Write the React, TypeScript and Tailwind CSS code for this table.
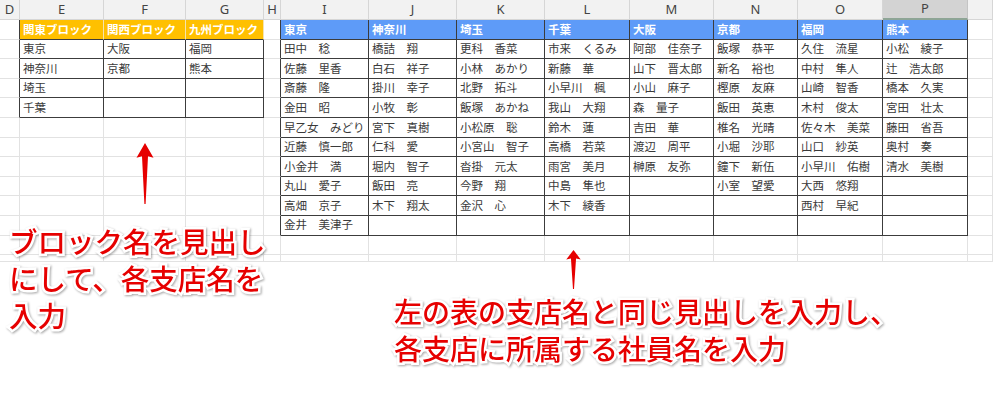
import React from 'react';

// Column letters across the visible sheet (D is cut off at the left edge)
const columns = ['D', 'E', 'F', 'G', 'H', 'I', 'J', 'K', 'L', 'M', 'N', 'O', 'P', ''];

const blocks = [
  { title: '関東ブロック', branches: ['東京', '神奈川', '埼玉', '千葉'] },
  { title: '関西ブロック', branches: ['大阪', '京都'] },
  { title: '九州ブロック', branches: ['福岡', '熊本'] },
];

const branches = [
  { title: '東京', staff: ['田中　稔', '佐藤　里香', '斎藤　隆', '金田　昭', '早乙女　みどり', '近藤　慎一郎', '小金井　満', '丸山　愛子', '高畑　京子', '金井　美津子'] },
  { title: '神奈川', staff: ['橋詰　翔', '白石　祥子', '掛川　幸子', '小牧　彰', '宮下　真樹', '仁科　愛', '堀内　智子', '飯田　亮', '木下　翔太'] },
  { title: '埼玉', staff: ['更科　香菜', '小林　あかり', '北野　拓斗', '飯塚　あかね', '小松原　聡', '小宮山　智子', '沓掛　元太', '今野　翔', '金沢　心'] },
  { title: '千葉', staff: ['市来　くるみ', '新藤　華', '小早川　楓', '我山　大翔', '鈴木　蓮', '高橋　若菜', '雨宮　美月', '中島　隼也', '木下　綾香'] },
  { title: '大阪', staff: ['阿部　佳奈子', '山下　晋太郎', '小山　麻子', '森　量子', '吉田　華', '渡辺　周平', '榊原　友弥'] },
  { title: '京都', staff: ['飯塚　恭平', '新名　裕也', '樫原　友麻', '飯田　英恵', '椎名　光晴', '小堀　沙耶', '鐘下　新伍', '小室　望愛'] },
  { title: '福岡', staff: ['久住　流星', '中村　隼人', '山崎　智香', '木村　俊太', '佐々木　美菜', '山口　紗英', '小早川　佑樹', '大西　悠翔', '西村　早紀'] },
  { title: '熊本', staff: ['小松　綾子', '辻　浩太郎', '橋本　久実', '宮田　壮太', '藤田　省吾', '奥村　奏', '清水　美樹'] },
];

const ROWS = 13;

function cellInfo(r: number, c: number) {
  // left table: E..G, rows 1..5
  if (c >= 1 && c <= 3 && r <= 5) {
    const b = blocks[c - 1];
    if (r === 1) return { kind: 'orange', text: b.title };
    return { kind: 'table', text: b.branches[r - 2] ?? '' };
  }
  // right table: I..P, rows 1..11
  if (c >= 5 && c <= 12 && r <= 11) {
    const b = branches[c - 5];
    if (r === 1) return { kind: 'blue', text: b.title };
    return { kind: 'table', text: b.staff[r - 2] ?? '' };
  }
  if ((c === 0 && r <= 5) || (c === 4 && r <= 11)) return { kind: 'edge', text: '' };
  return { kind: 'plain', text: '' };
}

function Cell({ r, c }: { r: number; c: number }) {
  const { kind, text } = cellInfo(r, c);
  let cls = 'border-r border-b border-[#e2e2e2]';
  if (kind === 'table') cls = 'border-r border-b border-[#3c3c3c] text-[#3a3a3a]';
  if (kind === 'orange') cls = 'border-r border-b border-r-[#f4e3b0] border-b-[#3c3c3c] bg-[#ffc000] text-white font-bold';
  if (kind === 'blue') cls = 'border-r border-b border-r-[#3c3c3c] border-b-[#3c3c3c] bg-[#5e9bf8] text-white font-bold';
  if (kind === 'edge') cls = 'border-r border-b border-r-[#3c3c3c] border-b-[#e2e2e2]';
  return (
    <div className={`flex items-center overflow-hidden whitespace-nowrap pl-[3px] text-[11.5px] leading-none ${cls}`}>
      {text}
    </div>
  );
}

function Arrow({ className }: { className: string }) {
  return (
    <svg className={className} viewBox="0 0 20 62" preserveAspectRatio="none">
      <path d="M10 0 L18.5 15 L13 13.5 L10.6 62 L9.4 62 L7 13.5 L1.5 15 Z" fill="#e60000" />
    </svg>
  );
}

const noteCls =
  "absolute leading-[37px] font-medium text-[#e60000] whitespace-nowrap [paint-order:stroke_fill] [-webkit-text-stroke:5px_white] drop-shadow-[1px_1px_1px_rgba(0,0,0,0.35)]";

export default function App() {
  return (
    <div
      className="relative w-[993px] h-[402px] overflow-hidden bg-white"
      style={{ fontFamily: '"Noto Sans CJK JP", "Noto Sans", sans-serif' }}
    >
      <div className="grid grid-cols-[20px_84px_82px_78px_17px_88px_88px_88px_85px_84px_84px_85px_85px_1fr] grid-rows-[20px_repeat(12,19.6px)_7px]">
        {columns.map((col, c) => (
          <div
            key={`h${c}`}
            className={
              c === 12
                ? 'flex items-center justify-center border-r border-b-2 border-r-[#c4c4c4] border-b-[#8ea596] bg-[#d3d3d3] text-[13px] text-[#444]'
                : 'flex items-center justify-center border-r border-b border-[#d6d6d6] bg-[#f2f2f2] text-[13px] text-[#444]'
            }
            style={{ fontFamily: '"Noto Sans", sans-serif' }}
          >
            {col}
          </div>
        ))}
        {Array.from({ length: ROWS }, (_, i) => i + 1).map(r =>
          columns.map((_, c) => <Cell key={`${r}-${c}`} r={r} c={c} />)
        )}
      </div>

      {/* annotations laid over the sheet */}
      <Arrow className="absolute left-[135px] top-[143px] w-[20px] h-[61px]" />
      <Arrow className="absolute left-[565px] top-[250px] w-[17px] h-[39px]" />

      <div className={`${noteCls} text-[28.5px] left-[9px] top-[222px]`}>
        <div>ブロック名を見出し</div>
        <div>にして、各支店名を</div>
        <div>入力</div>
      </div>
      <div className={`${noteCls} text-[28px] left-[394px] top-[293px]`}>
        <div>左の表の支店名と同じ見出しを入力し、</div>
        <div>各支店に所属する社員名を入力</div>
      </div>
    </div>
  );
}
